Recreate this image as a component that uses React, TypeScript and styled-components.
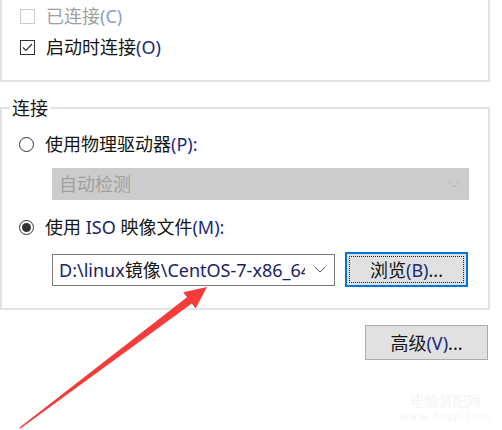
import React from "react";
import styled, { createGlobalStyle } from "styled-components";

const Global = createGlobalStyle`
  html, body { margin: 0; padding: 0; background: #ffffff; }
  body { font-family: "Noto Sans", "Noto Sans CJK SC", sans-serif; }
`;

const Page = styled.div`
  position: relative;
  width: 502px;
  height: 430px;
  overflow: hidden;
  background: #ffffff;
  font-family: "Noto Sans", "Noto Sans CJK SC", sans-serif;
  font-size: 18px;
  line-height: 24px;
  color: #151515;
`;

const Column = styled.div`
  width: 490px;
  display: flex;
  flex-direction: column;
`;

const TopGroup = styled.div`
  box-sizing: border-box;
  height: 82px;
  border: 2px solid #e3e3e3;
  border-top: none;
  padding: 4px 0 0 18px;
  display: flex;
  flex-direction: column;
  gap: 7px;
`;

const OptionRow = styled.div<{ $disabled?: boolean }>`
  display: flex;
  align-items: center;
  gap: 11px;
  height: 24px;
  white-space: nowrap;
  color: ${(p) => (p.$disabled ? "#a0a0a0" : "#151515")};
`;

const Key = styled.span<{ $disabled?: boolean }>`
  color: ${(p) => (p.$disabled ? "#86a0cc" : "#1c2a78")};
`;

const Latin = styled.span`
  color: #1a2266;
`;

const CheckBox = styled.span<{ $disabled?: boolean }>`
  box-sizing: border-box;
  width: 15px;
  height: 15px;
  flex: none;
  border: 1px solid ${(p) => (p.$disabled ? "#cccccc" : "#333333")};
  background: #ffffff;
  display: flex;
  align-items: center;
  justify-content: center;
`;

const Radio = styled.span<{ $checked?: boolean }>`
  box-sizing: border-box;
  width: 15px;
  height: 15px;
  flex: none;
  border-radius: 50%;
  border: 1px solid #333333;
  display: flex;
  align-items: center;
  justify-content: center;
  &::after {
    content: "";
    display: ${(p) => (p.$checked ? "block" : "none")};
    width: 9px;
    height: 9px;
    border-radius: 50%;
    background: #333333;
  }
`;

const Group = styled.fieldset`
  margin: 14px 0 0;
  padding: 0;
  min-width: 0;
  border: 2px solid #e3e3e3;
`;

const Legend = styled.legend`
  margin-left: 8px;
  padding: 0 2px;
  line-height: 24px;
  color: #151515;
`;

const GroupBody = styled.div`
  display: flex;
  flex-direction: column;
  padding: 12px 0 21px 17px;
`;

const Combo = styled.div<{ $disabled?: boolean; $width: number }>`
  box-sizing: border-box;
  width: ${(p) => p.$width}px;
  height: 32px;
  flex: none;
  display: flex;
  align-items: center;
  gap: 9px;
  padding: 0 8px 0 6px;
  border: 1px solid ${(p) => (p.$disabled ? "#cccccc" : "#7a7a7a")};
  background: ${(p) => (p.$disabled ? "#cccccc" : "#ffffff")};
  color: ${(p) => (p.$disabled ? "#a0a0a0" : "#151515")};
`;

const Indent = styled.div<{ $top: number }>`
  margin-top: ${(p) => p.$top}px;
  margin-left: 33px;
  display: flex;
  align-items: center;
  gap: 10px;
`;

const GroupRow = styled(OptionRow)<{ $top: number }>`
  margin-top: ${(p) => p.$top}px;
`;

const ComboText = styled.span`
  flex: 1;
  min-width: 0;
  overflow: hidden;
  white-space: nowrap;
`;

const Button = styled.button<{ $focused?: boolean }>`
  box-sizing: border-box;
  width: 123px;
  height: 35px;
  flex: none;
  padding: 0;
  font: inherit;
  color: #151515;
  background: #e1e1e1;
  border: ${(p) => (p.$focused ? "2px solid #0078d7" : "1px solid #adadad")};
  outline: ${(p) => (p.$focused ? "1px dotted #222222" : "none")};
  outline-offset: -5px;
`;

const Footer = styled.div`
  display: flex;
  justify-content: flex-end;
  margin-top: 15px;
  padding-right: 2px;
`;

const ArrowLayer = styled.svg`
  position: absolute;
  left: 0;
  top: 0;
  pointer-events: none;
`;

const Watermark = styled.div`
  position: absolute;
  right: 11px;
  top: 392px;
  display: flex;
  flex-direction: column;
  align-items: center;
  gap: 3px;
  color: #f4f4f4;
  pointer-events: none;
`;

const WatermarkTitle = styled.span`
  font-size: 14px;
  line-height: 16px;
  font-family: "Noto Sans CJK SC", sans-serif;
`;

const WatermarkUrl = styled.span`
  font-size: 10px;
  line-height: 11px;
  letter-spacing: 1.6px;
`;

const Chevron = ({ color }: { color: string }) => (
  <svg width="12" height="7" viewBox="0 0 12 7" style={{ flex: "none" }}>
    <polyline points="0.5,0.5 6,6 11.5,0.5" fill="none" stroke={color} strokeWidth="1" />
  </svg>
);

const Tick = () => (
  <svg width="13" height="13" viewBox="0 0 13 13">
    <polyline points="2,6.5 5,9.5 11,3" fill="none" stroke="#333" strokeWidth="1.2" />
  </svg>
);

export default function App() {
  return (
    <Page>
      <Global />
      <Column>
        <TopGroup>
          <OptionRow $disabled>
            <CheckBox $disabled />
            <span>
              已连接<Key $disabled>(C)</Key>
            </span>
          </OptionRow>
          <OptionRow>
            <CheckBox>
              <Tick />
            </CheckBox>
            <span>
              启动时连接<Key>(O)</Key>
            </span>
          </OptionRow>
        </TopGroup>

        <Group>
          <Legend>连接</Legend>
          <GroupBody>
            <GroupRow $top={0}>
              <Radio />
              <span>
                使用物理驱动器<Key>(P):</Key>
              </span>
            </GroupRow>
            <Indent $top={12}>
              <Combo $disabled $width={417}>
                <ComboText>自动检测</ComboText>
                <Chevron color="#b4b4b4" />
              </Combo>
            </Indent>
            <GroupRow $top={15}>
              <Radio $checked />
              <span>
                使用 <Latin>ISO</Latin> 映像文件<Key>(M):</Key>
              </span>
            </GroupRow>
            <Indent $top={13}>
              <Combo $width={283}>
                <ComboText>
                  <Latin>D:\linux</Latin>镜像<Latin>\CentOS-7-x86_64</Latin>
                </ComboText>
                <Chevron color="#555555" />
              </Combo>
              <Button $focused>
                浏览<Key>(B)</Key>...
              </Button>
            </Indent>
          </GroupBody>
        </Group>

        <Footer>
          <Button>
            高级<Key>(V)</Key>...
          </Button>
        </Footer>
      </Column>

      <ArrowLayer width="502" height="430" viewBox="0 0 502 430">
        <polygon
          points="19.5,427.6 187,297.2 183.2,292.2 207,287 195.6,308.4 191.8,303.4 20.5,428.4"
          fill="#f63b3b"
        />
      </ArrowLayer>

      <Watermark>
        <WatermarkTitle>电脑装配网</WatermarkTitle>
        <WatermarkUrl>www.dnzp.com</WatermarkUrl>
      </Watermark>
    </Page>
  );
}
